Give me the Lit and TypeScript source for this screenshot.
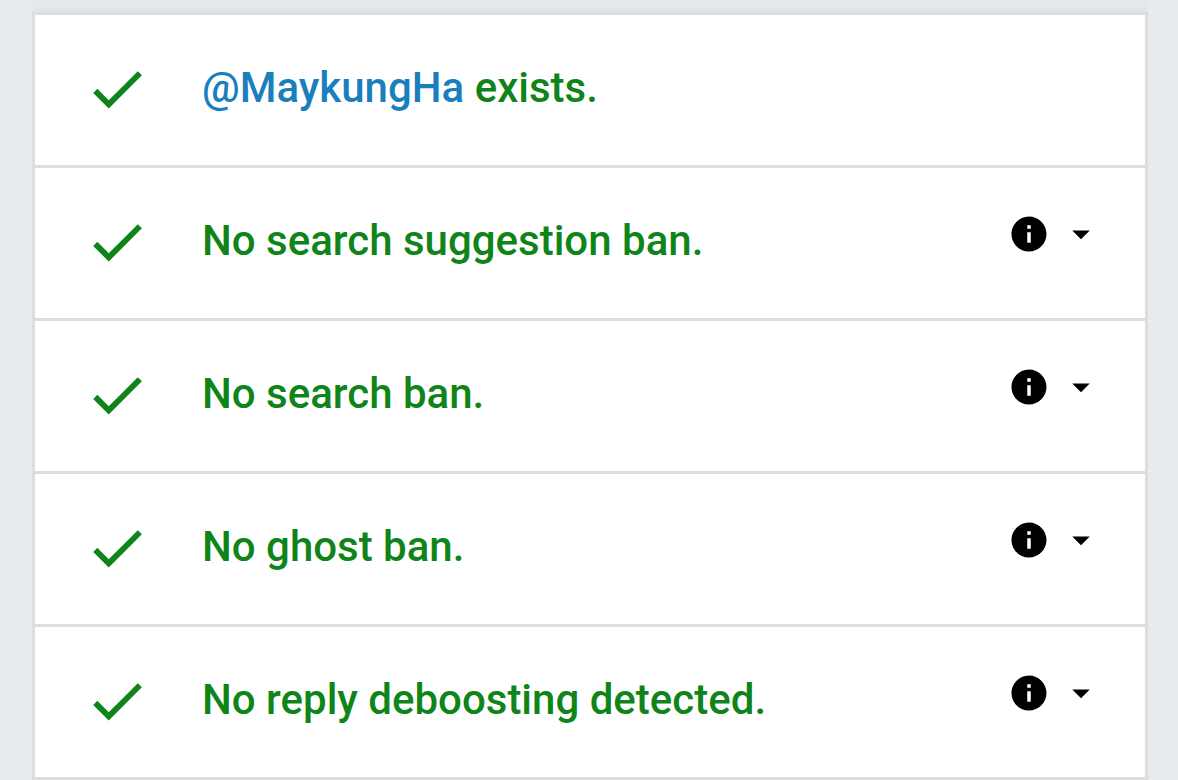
import { LitElement, html, css, nothing } from "lit";
import { customElement, property } from "lit/decorators.js";

interface TestResult {
  handle?: string;
  text: string;
  details: boolean;
}

const RESULTS: TestResult[] = [
  { handle: "@MaykungHa", text: "exists.", details: false },
  { text: "No search suggestion ban.", details: true },
  { text: "No search ban.", details: true },
  { text: "No ghost ban.", details: true },
  { text: "No reply deboosting detected.", details: true },
];

@customElement("result-row")
export class ResultRow extends LitElement {
  @property({ attribute: false }) result!: TestResult;

  static styles = css`
    :host {
      display: flex;
      align-items: flex-start;
      padding: 46px 43px 50px 49px;
      border-bottom: 3px solid #ddd;
    }
    .check {
      flex: none;
      width: 66px;
      height: 66px;
      margin: -5px 52px -7px 0;
      fill: #0f8419;
    }
    .text {
      flex: 1;
      min-width: 0;
      margin: 0;
      font-size: 42px;
      line-height: 54px;
      font-weight: 500;
      color: #0f8419;
    }
    .handle {
      color: #1b7fbd;
      text-decoration: none;
    }
    .more {
      display: flex;
      align-items: center;
      gap: 10px;
      height: 40px;
      padding: 0;
      border: 0;
      background: none;
      color: #000;
      cursor: pointer;
    }
    .more svg {
      width: 42px;
      height: 42px;
      fill: currentColor;
    }
  `;

  render() {
    const { handle, text, details } = this.result;
    return html`
      <svg class="check" viewBox="0 0 24 24" aria-hidden="true">
        <path d="M9 16.1 4.85 11.95l-1.5 1.5L9 19.1 21.05 7l-1.5-1.5z" />
      </svg>
      <p class="text">${handle
          ? html`<a class="handle" href="#profile">${handle}</a> `
          : nothing}${text}</p>
      ${details
        ? html`<button class="more" type="button" aria-label="Details">
            <svg viewBox="0 0 24 24" aria-hidden="true">
              <path d="M12 2C6.48 2 2 6.48 2 12s4.48 10 10 10 10-4.48 10-10S17.52 2 12 2zm1 15h-2v-6h2v6zm0-8h-2V7h2v2z" />
            </svg>
            <svg viewBox="0 0 24 24" aria-hidden="true">
              <path d="M7 10l5 5 5-5z" />
            </svg>
          </button>`
        : nothing}
    `;
  }
}

@customElement("app-root")
export class AppRoot extends LitElement {
  static styles = css`
    :host {
      display: block;
      box-sizing: border-box;
      min-height: 100vh;
      background: #e6ebef;
      font-family: Roboto, sans-serif;
    }
    .page {
      padding: 0 30px 0 32px;
    }
    .shade {
      height: 12px;
      background: linear-gradient(#e3e9ed, #e3e8ec 50%, #dfe3e6);
    }
    .results {
      border: 3px solid #ddd;
      border-bottom: 0;
      background: #fff;
    }
  `;

  render() {
    return html`<div class="page">
      <div class="shade"></div>
      <main class="results">
        ${RESULTS.map((r) => html`<result-row .result=${r}></result-row>`)}
      </main>
    </div>`;
  }
}
